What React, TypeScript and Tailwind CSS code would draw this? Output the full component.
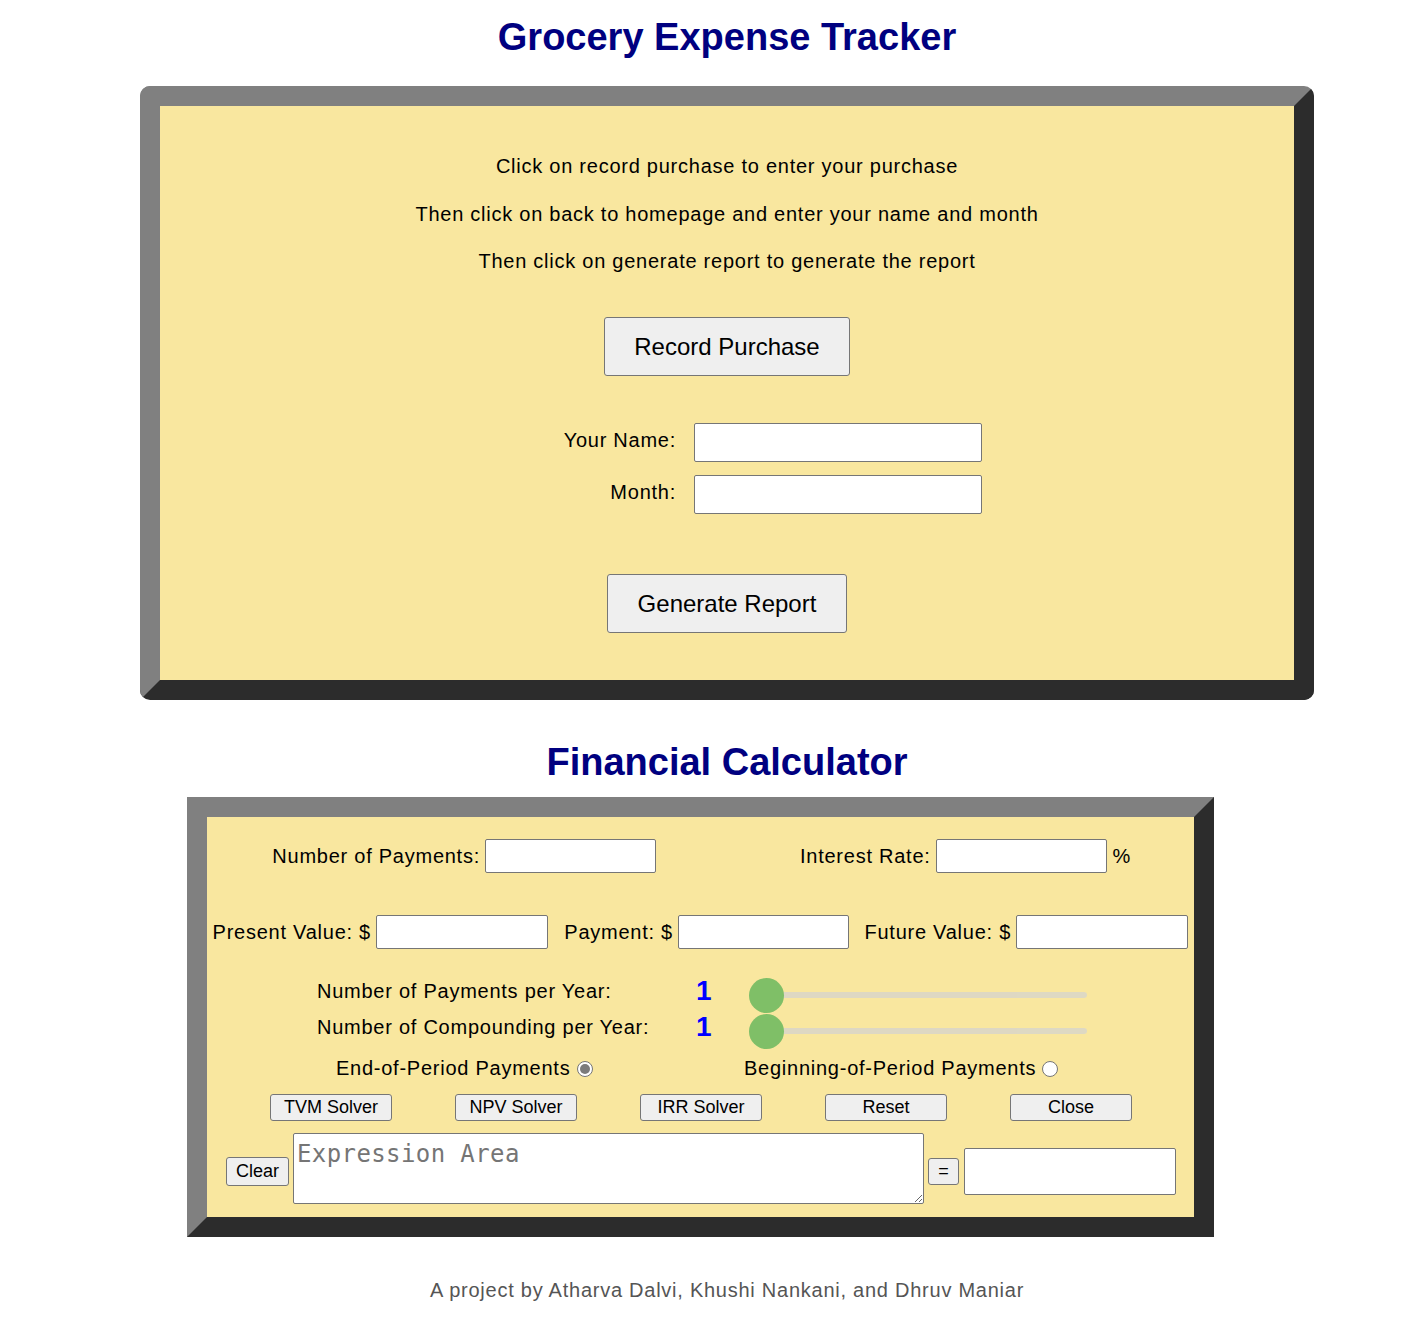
import React from "react";

const inputCls = "border border-[#767676] rounded-[2px] bg-white outline-none";
const btnCls =
  "bg-[#efefef] border border-[#767676] rounded-[3px] text-black tracking-normal flex items-center justify-center";

const solverButtons = ["TVM Solver", "NPV Solver", "IRR Solver", "Reset", "Close"];

const Slider = () => (
  <input
    type="range"
    min={1}
    max={12}
    defaultValue={1}
    className="appearance-none w-[338px] h-[6px] rounded-[5px] bg-[#d3d3d3] opacity-70 outline-none [&::-webkit-slider-thumb]:appearance-none [&::-webkit-slider-thumb]:w-[35px] [&::-webkit-slider-thumb]:h-[35px] [&::-webkit-slider-thumb]:rounded-full [&::-webkit-slider-thumb]:bg-[#4CAF50] [&::-webkit-slider-thumb]:cursor-pointer"
  />
);

const Radio = ({ checked }: { checked?: boolean }) => (
  <span className="w-[16px] h-[16px] rounded-full border border-[#767676] bg-white flex items-center justify-center">
    {checked ? <span className="w-[10px] h-[10px] rounded-full bg-[#7b7b7b]"></span> : null}
  </span>
);

const GroceryBox = () => {
  return (
    <div className="ml-[140px] mt-[27px] w-[1174px] rounded-[10px] border-[20px] border-t-[#808080] border-l-[#808080] border-b-[#2c2c2c] border-r-[#2c2c2c] bg-[#f9e79f]">
      <div className="flex flex-col items-center text-[20px] leading-[23px] tracking-[0.75px] pb-[47px]">
        <p className="mt-[49px]">Click on record purchase to enter your purchase</p>
        <p className="mt-[25px]">Then click on back to homepage and enter your name and month</p>
        <p className="mt-[24px]">Then click on generate report to generate the report</p>
        <button className={`${btnCls} mt-[44px] w-[246px] h-[59px] text-[24px]`}>Record Purchase</button>
        <div className="self-start mt-[47px] flex flex-col gap-[13px]">
          <div className="flex items-center">
            <label className="w-[516px] text-right mb-[4px]">Your Name:</label>
            <input className={`${inputCls} ml-[18px] w-[288px] h-[39px]`} />
          </div>
          <div className="flex items-center">
            <label className="w-[516px] text-right mb-[4px]">Month:</label>
            <input className={`${inputCls} ml-[18px] w-[288px] h-[39px]`} />
          </div>
        </div>
        <button className={`${btnCls} mt-[60px] w-[240px] h-[59px] text-[24px]`}>Generate Report</button>
      </div>
    </div>
  );
};

const Calculator = () => {
  return (
    <div className="ml-[187px] mt-[13px] w-[1027px] border-[20px] border-t-[#808080] border-l-[#808080] border-b-[#2c2c2c] border-r-[#2c2c2c] bg-[#f9e79f]">
      <div className="flex flex-col text-[20px] leading-[23px] tracking-[0.75px] pb-[13px]">
        {/* row 1 */}
        <div className="flex items-center mt-[22px] h-[34px]">
          <div className="w-[449px] flex items-center justify-end">
            <span>Number of Payments:</span>
            <input className={`${inputCls} ml-[5px] w-[171px] h-[34px]`} />
          </div>
          <div className="ml-[144px] flex items-center">
            <span>Interest Rate:</span>
            <input className={`${inputCls} ml-[5px] w-[171px] h-[34px]`} />
            <span className="ml-[6px]">%</span>
          </div>
        </div>
        {/* row 2 */}
        <div className="flex items-center mt-[42px] h-[34px]">
          <div className="w-[341px] flex items-center justify-end">
            <span>Present Value: $</span>
            <input className={`${inputCls} ml-[5px] w-[172px] h-[34px]`} />
          </div>
          <div className="w-[301px] flex items-center justify-end">
            <span>Payment: $</span>
            <input className={`${inputCls} ml-[5px] w-[171px] h-[34px]`} />
          </div>
          <div className="w-[339px] flex items-center justify-end">
            <span>Future Value: $</span>
            <input className={`${inputCls} ml-[5px] w-[172px] h-[34px]`} />
          </div>
        </div>
        {/* sliders */}
        <div className="mt-[28px] ml-[110px] grid grid-cols-[379px_53px_338px]">
          <div className="h-[36px] flex items-center"><span className="mb-[8px]">Number of Payments per Year:</span></div>
          <div className="h-[36px] flex items-center"><span className="mb-[8px] text-[28px] leading-[32px] font-bold text-[#0000ff]">1</span></div>
          <div className="h-[36px] flex items-center"><Slider /></div>
          <div className="h-[36px] flex items-center"><span className="mb-[8px]">Number of Compounding per Year:</span></div>
          <div className="h-[36px] flex items-center"><span className="mb-[8px] text-[28px] leading-[32px] font-bold text-[#0000ff]">1</span></div>
          <div className="h-[36px] flex items-center"><Slider /></div>
        </div>
        {/* radios */}
        <div className="flex items-center h-[39px]">
          <div className="ml-[129px] w-[408px] flex items-center gap-[7px]">
            <span>End-of-Period Payments</span>
            <Radio checked />
          </div>
          <div className="flex items-center gap-[6px]">
            <span>Beginning-of-Period Payments</span>
            <Radio />
          </div>
        </div>
        {/* solver buttons */}
        <div className="flex mt-[6px] ml-[63px] gap-[63px]">
          {solverButtons.map((b) => (
            <button key={b} className={`${btnCls} w-[122px] h-[27px] text-[18px] rounded-[2px]`}>
              {b}
            </button>
          ))}
        </div>
        {/* expression row */}
        <div className="flex items-start mt-[12px] ml-[19px]">
          <button className={`${btnCls} mt-[24px] w-[63px] h-[29px] text-[18px] rounded-[2px]`}>Clear</button>
          <textarea
            placeholder="Expression Area"
            className={`${inputCls} ml-[4px] w-[631px] h-[71px] pt-[6px] pl-[3px] pr-[2px] font-['DejaVu_Sans_Mono',monospace] text-[24px] leading-[28px] tracking-[0.4px] placeholder:text-[#757575]`}
          ></textarea>
          <button className={`${btnCls} ml-[4px] mt-[25px] w-[31px] h-[27px] text-[18px] rounded-[2px]`}>=</button>
          <input className={`${inputCls} ml-[5px] mt-[15px] w-[212px] h-[47px]`} />
        </div>
      </div>
    </div>
  );
};

export default function App() {
  return (
    <div className="w-[1404px] min-h-[1330px] bg-white text-black font-['Liberation_Sans',Arial,sans-serif]">
      <h1 className="ml-[140px] w-[1174px] pt-[15px] text-center text-[38px] leading-[44px] font-bold text-[#000080]">
        Grocery Expense Tracker
      </h1>
      <GroceryBox />
      <h2 className="ml-[140px] w-[1174px] mt-[40px] text-center text-[38px] leading-[44px] font-bold text-[#000080]">
        Financial Calculator
      </h2>
      <Calculator />
      <p className="ml-[140px] w-[1174px] mt-[42px] text-center text-[20px] leading-[23px] tracking-[0.75px] text-[#555555]">
        A project by Atharva Dalvi, Khushi Nankani, and Dhruv Maniar
      </p>
    </div>
  );
}
